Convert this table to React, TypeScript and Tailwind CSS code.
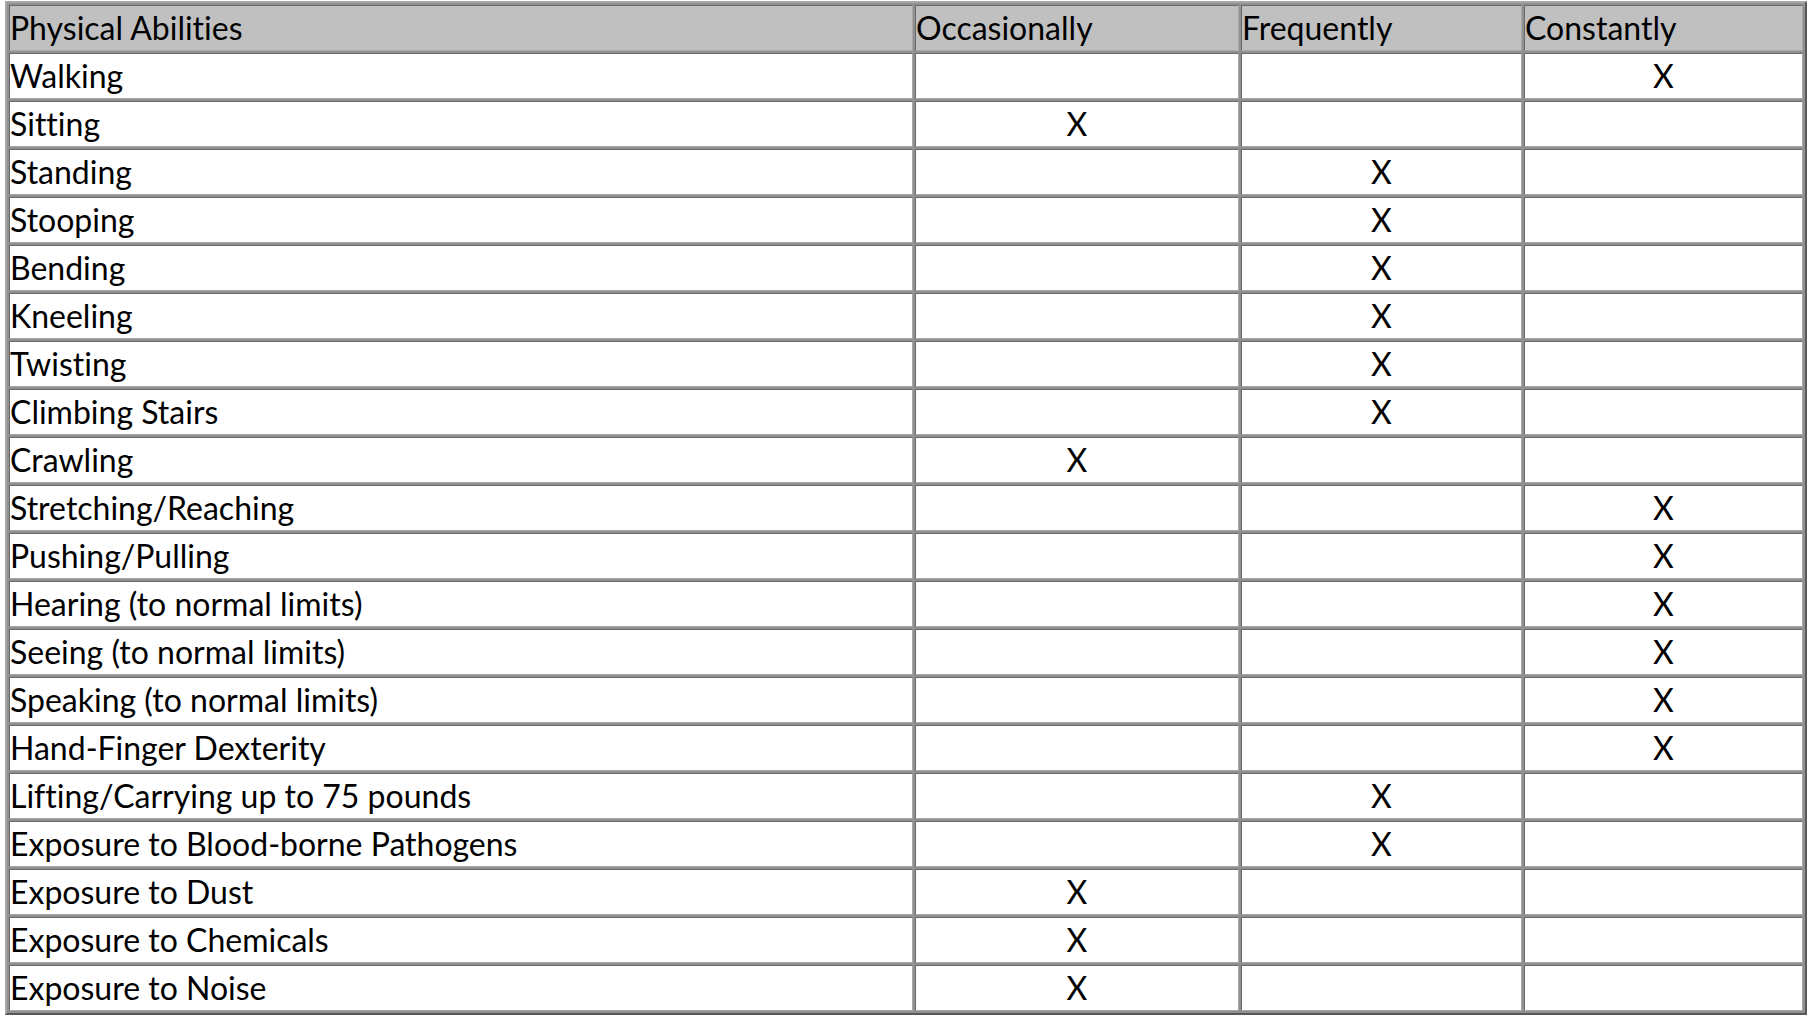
import React from "react";

const rows: [string, number][] = [
  ["Walking", 3],
  ["Sitting", 1],
  ["Standing", 2],
  ["Stooping", 2],
  ["Bending", 2],
  ["Kneeling", 2],
  ["Twisting", 2],
  ["Climbing Stairs", 2],
  ["Crawling", 1],
  ["Stretching/Reaching", 3],
  ["Pushing/Pulling", 3],
  ["Hearing (to normal limits)", 3],
  ["Seeing (to normal limits)", 3],
  ["Speaking (to normal limits)", 3],
  ["Hand-Finger Dexterity", 3],
  ["Lifting/Carrying up to 75 pounds", 2],
  ["Exposure to Blood-borne Pathogens", 2],
  ["Exposure to Dust", 1],
  ["Exposure to Chemicals", 1],
  ["Exposure to Noise", 1],
];

const cell =
  "h-[46px] p-0 border border-t-[#6a6a6a] border-l-[#6a6a6a] border-b-[#a8a8a8] border-r-[#a8a8a8] leading-[38px] align-middle";

export default function App() {
  return (
    <div
      className="bg-white min-h-screen pl-[5px] pt-[1px] [font-variant-ligatures:none]"
      style={{ fontFamily: "Lato, 'Liberation Sans', sans-serif" }}
    >
      <table className="w-[1802px] border-separate border-spacing-[2px] border-2 border-t-[#a8a8a8] border-l-[#a8a8a8] border-b-[#585858] border-r-[#585858] bg-[#909090] text-[32px] text-black">
        <colgroup>
          <col className="w-[904px]" />
          <col className="w-[324px]" />
          <col className="w-[281px]" />
          <col />
        </colgroup>
        <thead>
          <tr>
            <th className={`${cell} bg-[#c0c0c0] text-left font-normal`}>Physical Abilities</th>
            <th className={`${cell} bg-[#c0c0c0] text-left font-normal`}>Occasionally</th>
            <th className={`${cell} bg-[#c0c0c0] text-left font-normal`}>Frequently</th>
            <th className={`${cell} bg-[#c0c0c0] text-left font-normal`}>Constantly</th>
          </tr>
        </thead>
        <tbody>
          {rows.map(([name, col]) => (
            <tr key={name}>
              <td className={`${cell} bg-white text-left`}>{name}</td>
              <td className={`${cell} bg-white text-center`}>{col === 1 ? "X" : ""}</td>
              <td className={`${cell} bg-white text-center`}>{col === 2 ? "X" : ""}</td>
              <td className={`${cell} bg-white text-center`}>{col === 3 ? "X" : ""}</td>
            </tr>
          ))}
        </tbody>
      </table>
    </div>
  );
}
